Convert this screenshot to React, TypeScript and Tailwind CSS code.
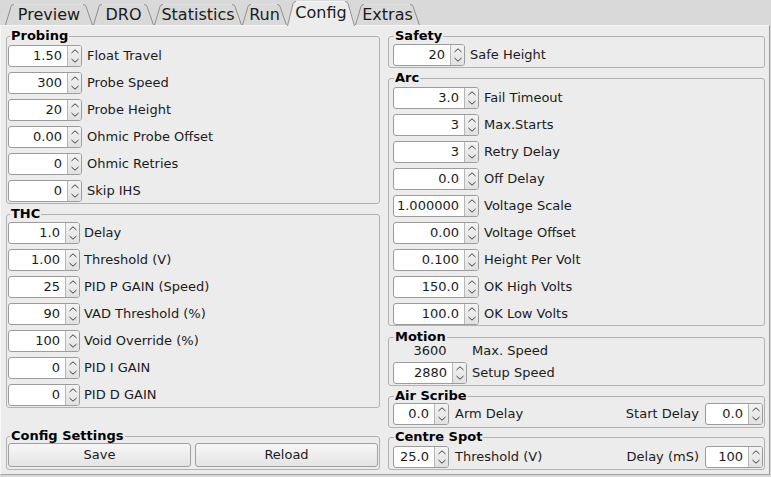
import type { ReactNode } from 'react'

const tabs = [
    { label: 'Preview', w: 88, cls: 'w-[88px]' },
    { label: 'DRO', w: 61, cls: 'w-[61px]' },
    { label: 'Statistics', w: 88, cls: 'w-[88px]' },
    { label: 'Run', w: 45, cls: 'w-[45px]' },
    { label: 'Config', w: 68, cls: 'w-[68px]', active: true },
    { label: 'Extras', w: 65, cls: 'w-[65px]' },
]

function Tab({ label, w, cls, active }: { label: string; w: number; cls: string; active?: boolean }) {
    const h = active ? 25 : 21
    return (
        <div className={`relative shrink-0 ${cls} ${active ? 'z-10 -mb-[1px] h-[25px] pt-[1px]' : 'h-[21px]'}`}>
            <svg className="absolute left-0 top-0" width={w} height={h}>
                <path d={`M0 ${h} L6 2 Q7 0 9 0 L${w - 10} 0 Q${w - 8} 0 ${w - 7} 2 L${w} ${h} Z`} fill={active ? '#ececec' : '#d9d9d9'} />
                <path d={`M9 0.5 L${w - 10} 0.5`} stroke={active ? '#f6f6f6' : '#e2e2e2'} fill="none" />
                <path d={`M0.5 ${h} L6 2.5 Q6.8 0.5 9 0.5`} stroke="#8f8f8f" fill="none" />
                <path d={`M${w - 10} 0.5 Q${w - 7.8} 0.5 ${w - 7} 2.5 L${w - 0.5} ${h}`} stroke="#8f8f8f" fill="none" />
            </svg>
            <div className="relative text-center text-[16px] leading-[21px] text-[#1b1b1b]">{label}</div>
        </div>
    )
}

function Chev({ up }: { up?: boolean }) {
    return (
        <svg width="8" height="5" viewBox="0 0 8 5">
            <polyline points={up ? '0.5,4 4,0.8 7.5,4' : '0.5,1 4,4.2 7.5,1'} fill="none" stroke="#3c3c3c" strokeWidth="1" />
        </svg>
    )
}

function Spin({ v, cls }: { v: string; cls: string }) {
    return (
        <div className={`flex h-[22px] shrink-0 rounded-[3px] border border-[#9c9c9c] bg-white ${cls}`}>
            <div className="flex-1 pr-[5px] text-right leading-[20px] text-[#1b1b1b]">{v}</div>
            <div className="flex w-[14px] flex-col items-center justify-center gap-[4px] rounded-r-[2px] border-l border-[#b6b6b6] bg-linear-to-b from-[#f3f3f3] to-[#e1e1e1]">
                <Chev up />
                <Chev />
            </div>
        </div>
    )
}

function Row({ v, label, spin, gap }: { v: string; label: string; spin: string; gap: string }) {
    return (
        <div className={`flex h-[22px] items-center ${gap}`}>
            <Spin v={v} cls={spin} />
            <span className="whitespace-nowrap">{label}</span>
        </div>
    )
}

function Group({ title, right, children, className = '', inner }: { title: string; right?: boolean; children: ReactNode; className?: string; inner: string }) {
    return (
        <fieldset className={`rounded-[3px] border border-[#b2b2b2] ${className}`}>
            <legend className={`px-[1px] text-[13px] font-bold leading-[14px] text-black ${right ? 'ml-[5px]' : 'ml-[3px]'}`}>{title}</legend>
            <div className={inner}>{children}</div>
        </fieldset>
    )
}

export default function App() {
    const probing = [
        ['1.50', 'Float Travel'],
        ['300', 'Probe Speed'],
        ['20', 'Probe Height'],
        ['0.00', 'Ohmic Probe Offset'],
        ['0', 'Ohmic Retries'],
        ['0', 'Skip IHS'],
    ]
    const thc = [
        ['1.0', 'Delay'],
        ['1.00', 'Threshold (V)'],
        ['25', 'PID P GAIN (Speed)'],
        ['90', 'VAD Threshold (%)'],
        ['100', 'Void Override (%)'],
        ['0', 'PID I GAIN'],
        ['0', 'PID D GAIN'],
    ]
    const arc = [
        ['3.0', 'Fail Timeout'],
        ['3', 'Max.Starts'],
        ['3', 'Retry Delay'],
        ['0.0', 'Off Delay'],
        ['1.000000', 'Voltage Scale'],
        ['0.00', 'Voltage Offset'],
        ['0.100', 'Height Per Volt'],
        ['150.0', 'OK High Volts'],
        ['100.0', 'OK Low Volts'],
    ]

    return (
        <div className="h-[477px] w-[771px] overflow-hidden bg-[#d9d9d9] font-['DejaVu_Sans',sans-serif] text-[13px] text-[#1b1b1b]">
            {/* tab bar */}
            <div className="relative z-10 flex h-[25px] items-end pl-[5px]">
                {tabs.map(t => (
                    <Tab key={t.label} {...t} />
                ))}
            </div>

            {/* page */}
            <div className="flex h-[450px] w-[770px] gap-[8px] border border-b-[#a3a3a3] border-l-[#f7f7f7] border-r-[#9a9a9a] border-t-[#f7f7f7] bg-[#ececec] pb-[4px] pl-[5px] pr-[3px] pt-[3px]">
                {/* left column */}
                <div className="flex w-[374px] flex-col">
                    <Group title="Probing" inner="flex flex-col gap-[5px] pb-[1px] pl-[1px] pt-[2px]">
                        {probing.map(([v, l]) => (
                            <Row key={l} v={v} label={l} spin="w-[74px]" gap="gap-[5px]" />
                        ))}
                    </Group>
                    <Group title="THC" className="mt-[3px]" inner="flex flex-col gap-[5px] pb-[1px] pl-[1px] pt-[1px]">
                        {thc.map(([v, l]) => (
                            <Row key={l} v={v} label={l} spin="w-[72px]" gap="gap-[4px]" />
                        ))}
                    </Group>
                    <Group title="Config Settings" className="mt-auto" inner="flex gap-[4px] px-[1px] pb-[2px]">
                        <button className="h-[24px] flex-1 rounded-[3px] border border-[#a0a0a0] bg-linear-to-b from-[#f7f7f7] to-[#e4e4e4] text-[13px]">Save</button>
                        <button className="h-[24px] flex-1 rounded-[3px] border border-[#a0a0a0] bg-linear-to-b from-[#f7f7f7] to-[#e4e4e4] text-[13px]">Reload</button>
                    </Group>
                </div>

                {/* right column */}
                <div className="flex w-[377px] flex-col">
                    <Group title="Safety" right inner="pb-[1px] pl-[4px] pt-[1px]">
                        <Row v="20" label="Safe Height" spin="w-[72px]" gap="gap-[5px]" />
                    </Group>
                    <Group title="Arc" right className="mt-[3px]" inner="flex flex-col gap-[5px] pl-[4px] pt-[2px]">
                        {arc.map(([v, l]) => (
                            <Row key={l} v={v} label={l} spin="w-[86px]" gap="gap-[5px]" />
                        ))}
                    </Group>
                    <Group title="Motion" right className="mt-[4px]" inner="flex flex-col gap-[4px] pb-[1px] pl-[4px]">
                        <div className="flex h-[14px] items-center gap-[5px] leading-[14px]">
                            <span className="w-[74px] text-center">3600</span>
                            <span>Max. Speed</span>
                        </div>
                        <Row v="2880" label="Setup Speed" spin="w-[74px]" gap="gap-[5px]" />
                    </Group>
                    <Group title="Air Scribe" right className="mt-[3px]" inner="flex items-center justify-between pb-[2px] pl-[4px] pr-[1px]">
                        <Row v="0.0" label="Arm Delay" spin="w-[56px]" gap="gap-[6px]" />
                        <div className="flex h-[22px] items-center gap-[6px]">
                            <span>Start Delay</span>
                            <Spin v="0.0" cls="w-[58px]" />
                        </div>
                    </Group>
                    <Group title="Centre Spot" right className="mt-[2px]" inner="flex items-center justify-between pb-[1px] pl-[4px] pr-[1px] pt-[2px]">
                        <Row v="25.0" label="Threshold (V)" spin="w-[56px]" gap="gap-[6px]" />
                        <div className="flex h-[22px] items-center gap-[6px]">
                            <span>Delay (mS)</span>
                            <Spin v="100" cls="w-[58px]" />
                        </div>
                    </Group>
                </div>
            </div>
        </div>
    )
}
